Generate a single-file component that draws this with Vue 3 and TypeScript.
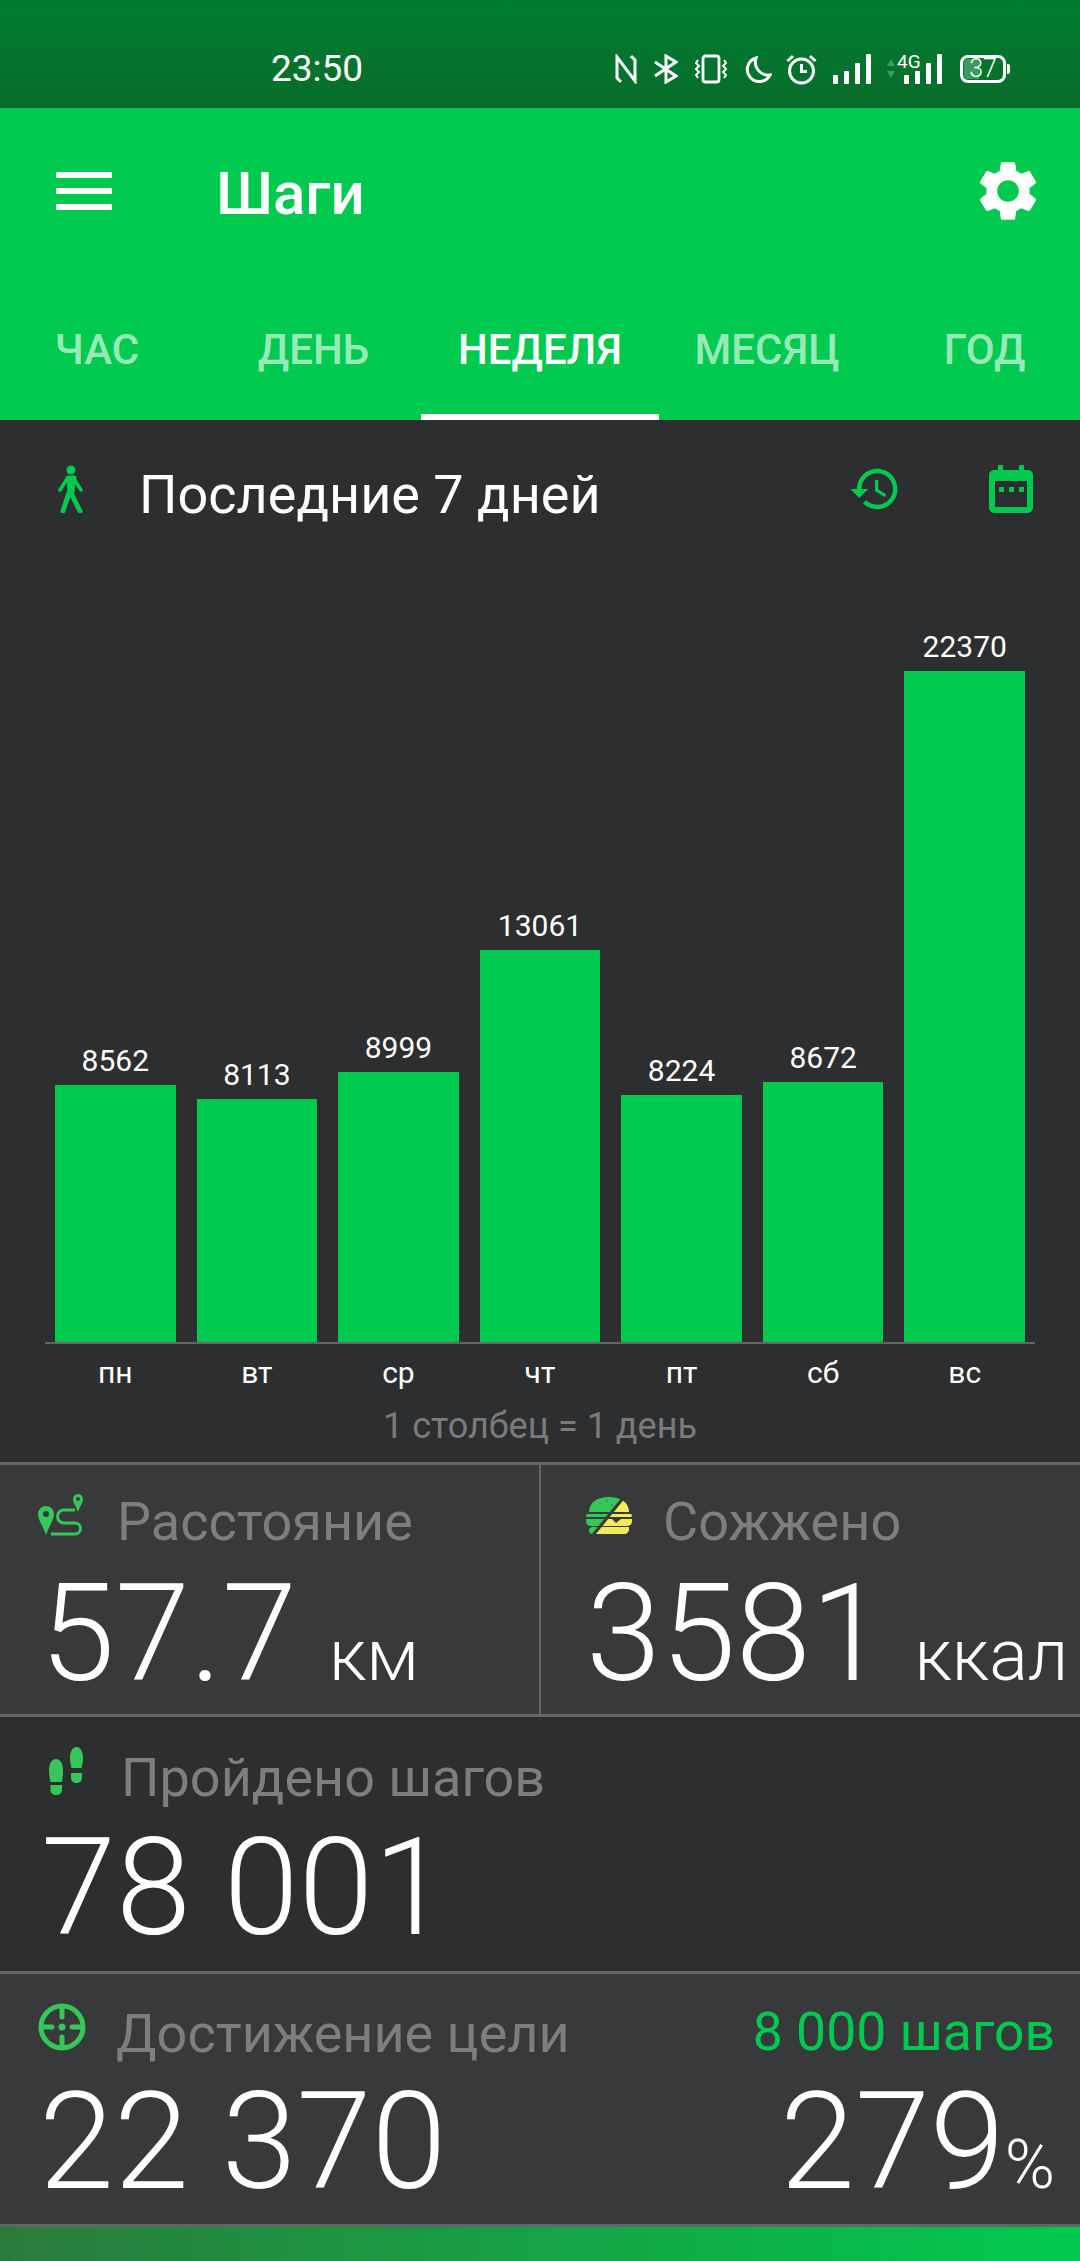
<template>
  <div class="screen">
    <div class="status-bar">
      <span class="clock">23:50</span>
      <div class="status-icons">
        <svg width="22" height="30" viewBox="0 0 22 30" fill="none" stroke="#fff" stroke-width="3"><path d="M6 28 L2 24 V3 L20 27 V6 L16 2" /></svg>
        <svg class="ml-17" width="24" height="30" viewBox="0 0 24 30" fill="none" stroke="#fff" stroke-width="3"><path d="M1 8 L22 22 L12 28 V2 L22 8 L1 22" /></svg>
        <svg class="ml-17" width="32" height="30" viewBox="0 0 32 30" fill="none" stroke="#fff" stroke-width="2.8"><rect x="8" y="2" width="16" height="26" rx="2.5" /><path d="M3 6 L1 9 L4 12 L1 15 L4 18 L1 21 L3 24 M29 6 L31 9 L28 12 L31 15 L28 18 L31 21 L29 24" stroke-width="2" /></svg>
        <svg class="ml-18" width="27" height="27" viewBox="0 0 27 27" fill="none" stroke="#fff" stroke-width="3"><path d="M11 2 A12 12 0 1 0 25 19 A13 13 0 0 1 11 2 Z" /></svg>
        <svg class="ml-14" width="31" height="32" viewBox="0 0 31 32" fill="none" stroke="#fff" stroke-width="3"><circle cx="15.5" cy="18" r="12" /><path d="M15.5 11 V18.5 H21 M1.5 8 L7 3 M24 3 L29.5 8" /></svg>
        <svg class="ml-16" width="38" height="30" viewBox="0 0 38 30" fill="#fff"><rect x="0" y="21" width="5" height="9" rx="1" /><rect x="11" y="17" width="5" height="13" rx="1" /><rect x="22" y="9" width="5" height="21" rx="1" /><rect x="33" y="0" width="5" height="30" rx="1" /></svg>
        <div class="net ml-15">
          <svg width="10" height="22" viewBox="0 0 10 22" fill="#3f9a60"><path d="M5 1 L9 8 H1 Z M5 20 L1 13 H9 Z" /></svg>
          <span class="net-label">4G</span>
          <svg class="net-bars" width="38" height="30" viewBox="0 0 38 30" fill="#fff"><rect x="0" y="21" width="5" height="9" rx="1" /><rect x="11" y="17" width="5" height="13" rx="1" /><rect x="22" y="9" width="5" height="21" rx="1" /><rect x="33" y="0" width="5" height="30" rx="1" /></svg>
        </div>
        <div class="battery ml-18"><span class="battery-fill"></span><span class="battery-num">37</span></div>
      </div>
    </div>

    <header class="app-bar">
      <div class="toolbar">
        <div class="menu-icon"><span></span><span></span><span></span></div>
        <h1 class="title">Шаги</h1>
        <svg class="gear" width="72" height="72" viewBox="0 0 24 24" fill="#fff"><path d="M19.14 12.94c.04-.3.06-.61.06-.94 0-.32-.02-.64-.07-.94l2.03-1.58a.49.49 0 0 0 .12-.61l-1.92-3.32a.488.488 0 0 0-.59-.22l-2.39.96c-.5-.38-1.03-.7-1.62-.94l-.36-2.54a.484.484 0 0 0-.48-.41h-3.84c-.24 0-.43.17-.47.41l-.36 2.54c-.59.24-1.13.57-1.62.94l-2.39-.96c-.22-.08-.47 0-.59.22L2.74 8.87c-.12.21-.08.47.12.61l2.03 1.58c-.05.3-.09.63-.09.94s.02.64.07.94l-2.03 1.58a.49.49 0 0 0-.12.61l1.92 3.32c.12.22.37.29.59.22l2.39-.96c.5.38 1.03.7 1.62.94l.36 2.54c.05.24.24.41.48.41h3.84c.24 0 .44-.17.47-.41l.36-2.54c.59-.24 1.13-.56 1.62-.94l2.39.96c.22.08.47 0 .59-.22l1.92-3.32c.12-.22.07-.47-.12-.61l-2.01-1.58zM12 15.6c-1.98 0-3.6-1.62-3.6-3.6s1.62-3.6 3.6-3.6 3.6 1.62 3.6 3.6-1.62 3.6-3.6 3.6z" /></svg>
      </div>
      <nav class="tabs">
        <div v-for="tab in tabs" :key="tab.name" class="tab" :class="[tab.cls, { active: tab.active }]">{{ tab.name }}</div>
      </nav>
    </header>

    <section class="chart-section">
      <div class="chart-head">
        <svg class="head-icon" width="26" height="48" viewBox="0 0 26 48" fill="none" stroke="#00c94f" stroke-linecap="round" stroke-linejoin="round"><circle cx="14" cy="5" r="4.5" fill="#00c94f" stroke="none" /><path d="M11 13 H17 L14 28 L23 46 M12 28 L6 46" stroke-width="5" /><path d="M10 14 L3 25 M17 14 L24 25" stroke-width="3.6" /><path d="M11 13 H17 L16 27 H12 Z" fill="#00c94f" stroke-width="3" /></svg>
        <span class="period">Последние 7 дней</span>
        <svg class="head-icon" width="54" height="54" viewBox="0 0 24 24" fill="#00c94f"><path d="M13 3c-4.97 0-9 4.03-9 9H1l3.89 3.89.07.14L9 12H6c0-3.87 3.13-7 7-7s7 3.13 7 7-3.13 7-7 7c-1.93 0-3.68-.79-4.94-2.06l-1.42 1.42C8.27 19.99 10.51 21 13 21c4.97 0 9-4.03 9-9s-4.03-9-9-9zm-1 5v5l4.28 2.54.72-1.21-3.5-2.08V8H12z" /></svg>
        <svg class="head-icon calendar" width="44" height="48" viewBox="0 0 44 48"><path fill="#00c94f" d="M9 0h5v5h16V0h5v5h4a5 5 0 0 1 5 5v33a5 5 0 0 1-5 5H5a5 5 0 0 1-5-5V10a5 5 0 0 1 5-5h4z" /><rect x="6" y="16" width="32" height="26" fill="#2d2e30" /><path fill="#00c94f" d="M10 22h5v5h-5zM20 22h5v5h-5zM30 22h5v5h-5z" /></svg>
      </div>

      <div class="chart">
        <div v-for="day in days" :key="day.label" class="bar-col">
          <span class="bar-value">{{ day.steps }}</span>
          <div class="bar" :style="{ height: barHeight(day.steps) + 'px' }"></div>
        </div>
      </div>
      <div class="day-labels">
        <span v-for="day in days" :key="day.label">{{ day.label }}</span>
      </div>
      <div class="caption">1 столбец = 1 день</div>
    </section>

    <section class="row row-two light">
      <div class="cell cell-left">
        <div class="label">
          <svg class="label-icon" width="50" height="42" viewBox="0 0 50 42" fill="none"><path fill="#35c759" fill-rule="evenodd" d="M8 12a8 8 0 0 1 8 8c0 6-5 12-8 21C5 32 0 26 0 20a8 8 0 0 1 8-8zm0 5a3 3 0 1 0 0 6 3 3 0 0 0 0-6z" /><path fill="#35c759" fill-rule="evenodd" d="M40 0a5 5 0 0 1 5 5c0 4-3 7-5 13-2-6-5-9-5-13a5 5 0 0 1 5-5zm0 3a2 2 0 1 0 0 4 2 2 0 0 0 0-4z" /><path stroke="#35c759" stroke-width="3" d="M37 16H26a6.5 6.5 0 0 0 0 13h11a5.5 5.5 0 0 1 0 11H13" /></svg>
          <span class="label-text t-dist">Расстояние</span>
        </div>
        <div class="value-line">
          <span class="big">57.7</span><span class="unit unit-km">км</span>
        </div>
      </div>
      <div class="cell cell-right">
        <div class="label">
          <svg class="label-icon" width="46" height="37" viewBox="0 0 46 37"><defs><clipPath id="burgerGreen"><path d="M0 0H36L6 37H0Z" /></clipPath><clipPath id="burgerYellow"><path d="M40 0H46V37H10Z" /></clipPath></defs><g clip-path="url(#burgerGreen)" fill="#35c759"><path d="M3 15C3 5 12 0 23 0s20 5 20 15Z" /><rect x="0" y="17" width="46" height="3" rx="1.500" /><path d="M0 22H46V24C46 27 44 29 41 29H5C2 29 0 27 0 24Z" /><rect x="3" y="30" width="40" height="7" rx="3.500" /></g><g clip-path="url(#burgerYellow)" fill="#f4ec57"><path d="M3 15C3 5 12 0 23 0s20 5 20 15Z" /><rect x="0" y="17" width="46" height="3" rx="1.500" /><path d="M0 22H26L30 26 35 22H46V24C46 27 44 29 41 29H5C2 29 0 27 0 24Z" /><path d="M3 30H43V32C43 35 41 37 38 37H8C5 37 3 35 3 32Z" /></g><g fill="#2b8f47"><circle cx="14" cy="7" r="1" /><circle cx="21" cy="4" r="1" /><circle cx="26" cy="8" r="1" /></g></svg>
          <span class="label-text t-burn">Сожжено</span>
        </div>
        <div class="value-line value-burn">
          <span class="big">3581</span><span class="unit unit-kcal">ккал</span>
        </div>
      </div>
    </section>

    <section class="row row-steps">
      <div class="label">
        <svg class="label-icon" width="34" height="48" viewBox="0 0 34 48" fill="#35c759"><path d="M7 12c4.500 0 7 5 7 11 0 5-.7 10-1 12H1.500C1 33 0 28 0 23 0 17 2.500 12 7 12z" /><path d="M1.500 38H13v5c0 3-2.500 5-5.800 5S1.500 46 1.500 43z" /><path d="M27.500 0C31.500 0 34 5 34 10.500 34 15 33 19 32.500 21H22.500C22 19 21 15 21 10.500 21 5 23.500 0 27.500 0z" /><path d="M22 26H33V31C33 34 30.500 36 27.500 36S22 34 22 31z" /></svg>
        <span class="label-text t-steps">Пройдено шагов</span>
      </div>
      <div class="big big-steps">78 001</div>
    </section>

    <section class="row row-goal light">
      <div class="goal-top">
        <div class="label">
          <svg class="label-icon" width="48" height="48" viewBox="0 0 48 48" fill="none" stroke="#35c759" stroke-width="5" stroke-linecap="round"><circle cx="24" cy="24" r="21" /><path d="M24 5V14M24 34V43M5 24H14M34 24H43" /><circle cx="24" cy="24" r="3.500" fill="#35c759" stroke="none" /></svg>
          <span class="label-text t-goal">Достижение цели</span>
        </div>
        <span class="goal-target">8 000 шагов</span>
      </div>
      <div class="goal-bottom">
        <span class="big">22 370</span>
        <span class="goal-pct"><span class="big">279</span><span class="pct">%</span></span>
      </div>
    </section>

    <div class="bottom-strip"></div>
  </div>
</template>

<script setup lang="ts">
interface Day {
  label: string
  steps: number
}

const tabs = [
  { name: 'ЧАС', cls: 'tab-hour', active: false },
  { name: 'ДЕНЬ', cls: 'tab-day', active: false },
  { name: 'НЕДЕЛЯ', cls: 'tab-week', active: true },
  { name: 'МЕСЯЦ', cls: 'tab-month', active: false },
  { name: 'ГОД', cls: 'tab-year', active: false },
]

const days: Day[] = [
  { label: 'пн', steps: 8562 },
  { label: 'вт', steps: 8113 },
  { label: 'ср', steps: 8999 },
  { label: 'чт', steps: 13061 },
  { label: 'пт', steps: 8224 },
  { label: 'сб', steps: 8672 },
  { label: 'вс', steps: 22370 },
]

const barHeight = (steps: number) => Math.round(steps * 0.03)
</script>

<style>
html,
body {
  margin: 0;
  background: #2d2e30;
}
</style>

<style scoped>
.screen {
  width: 1080px;
  height: 2261px;
  overflow: hidden;
  font-family: Roboto, "Noto Sans", sans-serif;
  background: #2d2e30;
  color: #fff;
}

.status-bar {
  height: 108px;
  box-sizing: border-box;
  display: flex;
  align-items: flex-start;
  padding: 50px 74px 0 271px;
  background: linear-gradient(#007d31, #076c2b);
}
.clock {
  font-size: 37px;
  line-height: 38px;
  font-weight: 400;
}
.status-icons {
  margin-left: auto;
  display: flex;
  align-items: center;
  height: 38px;
}
.ml-14 { margin-left: 14px; }
.ml-15 { margin-left: 15px; }
.ml-16 { margin-left: 16px; }
.ml-17 { margin-left: 17px; }
.ml-18 { margin-left: 18px; }

.net {
  display: flex;
  align-items: center;
  position: relative;
  width: 56px;
  height: 30px;
}
.net-label {
  position: absolute;
  left: 11px;
  top: -3px;
  font-size: 19px;
  line-height: 22px;
}
.net-bars {
  position: absolute;
  left: 18px;
  top: 0;
}
.battery {
  position: relative;
  width: 46px;
  height: 28px;
  box-sizing: border-box;
  border: 3px solid #fff;
  border-radius: 8px;
}
.battery::after {
  content: "";
  position: absolute;
  right: -7px;
  top: 6px;
  width: 3px;
  height: 10px;
  background: #fff;
  border-radius: 0 2px 2px 0;
}
.battery-fill {
  position: absolute;
  left: 1px;
  top: 1px;
  bottom: 1px;
  width: 15px;
  background: #3f9a60;
  border-radius: 4px 0 0 4px;
}
.battery-num {
  position: absolute;
  inset: 0;
  text-align: center;
  font-size: 25px;
  line-height: 22px;
  font-weight: 300;
}

.app-bar {
  height: 312px;
  background: #00c94f;
}
.toolbar {
  height: 165px;
  display: flex;
  align-items: center;
  box-sizing: border-box;
  padding: 0 36px 0 56px;
}
.menu-icon {
  width: 56px;
  display: flex;
  flex-direction: column;
  gap: 10px;
}
.menu-icon span {
  height: 6px;
  background: #fff;
}
.title {
  margin: 6px 0 0 104px;
  font-size: 60px;
  font-weight: 500;
  line-height: 66px;
  flex: 1;
}
.tabs {
  display: grid;
  grid-template-columns: 194px 227px 238px 216px 205px;
  height: 147px;
}
.tab {
  box-sizing: border-box;
  text-align: center;
  font-size: 42px;
  font-weight: 500;
  line-height: 48px;
  padding-top: 53px;
  color: rgba(255, 255, 255, 0.62);
}
.tab-day { padding-left: 12px; }
.tab-year { padding-left: 14px; }
.tab.active {
  color: #fff;
  border-bottom: 6px solid #fff;
}

.chart-section {
  height: 1045px;
  box-sizing: border-box;
  border-bottom: 3px solid #636465;
  display: flex;
  flex-direction: column;
}
.chart-head {
  display: flex;
  align-items: center;
  height: 98px;
  padding: 26px 47px 0 57px;
}
.head-icon {
  margin-bottom: 12px;
}
.period {
  margin-left: 56px;
  font-size: 54px;
  line-height: 60px;
  flex: 1;
}
.calendar { margin-left: 87px; }
.chart {
  height: 798px;
  margin: 0 45px;
  padding: 0 10px;
  display: grid;
  grid-template-columns: repeat(7, 1fr);
  column-gap: 21px;
  align-items: end;
  border-bottom: 2px solid #636465;
}
.bar-col {
  display: flex;
  flex-direction: column;
  align-items: center;
}
.bar-value {
  font-size: 30px;
  line-height: 36px;
  margin-bottom: 6px;
}
.bar {
  width: 100%;
  background: #00c94f;
}
.day-labels {
  margin: 0 55px;
  display: grid;
  grid-template-columns: repeat(7, 1fr);
  column-gap: 21px;
  padding-top: 11px;
  text-align: center;
  font-size: 30px;
  line-height: 36px;
}
.caption {
  margin-top: 14px;
  text-align: center;
  font-size: 36px;
  line-height: 42px;
  color: #7a7b7c;
}

.row {
  box-sizing: border-box;
  border-bottom: 3px solid #636465;
}
.light {
  background: #38393b;
}
.row-two {
  height: 252px;
  display: grid;
  grid-template-columns: 541px 1fr;
}
.cell {
  padding-top: 25px;
  box-sizing: border-box;
}
.cell-left {
  padding-left: 38px;
  border-right: 2px solid #636465;
}
.cell-right {
  padding-left: 45px;
  white-space: nowrap;
}
.label {
  display: flex;
  align-items: center;
  height: 64px;
}
.label-icon {
  margin-bottom: 14px;
}
.label-text {
  font-size: 54px;
  line-height: 60px;
  color: #7d7e7f;
}
.t-dist { margin-left: 29px; }
.t-burn { margin-left: 31px; }
.t-steps { margin-left: 38px; }
.t-goal { margin-left: 30px; }
.big {
  font-size: 135px;
  font-weight: 300;
  line-height: 136px;
}
.value-line {
  display: flex;
  align-items: baseline;
  margin-top: 12px;
  padding-left: 2px;
}
.value-burn {
  padding-left: 0;
}
.unit {
  font-size: 72px;
  font-weight: 300;
  line-height: 68px;
}
.unit-km { margin-left: 32px; }
.unit-kcal { margin-left: 29px; }

.row-steps {
  height: 257px;
  padding: 29px 0 0 49px;
}
.big-steps {
  margin: 10px 0 0 -8px;
}

.row-goal {
  height: 253px;
  padding: 28px 25px 0 38px;
}
.goal-top {
  display: flex;
  align-items: center;
  justify-content: space-between;
}
.goal-target {
  font-size: 53.5px;
  line-height: 60px;
  margin-top: -4px;
  color: #00c94f;
}
.goal-bottom {
  display: flex;
  justify-content: space-between;
  align-items: baseline;
  margin-top: 8px;
  padding-left: 1px;
}
.goal-pct {
  display: flex;
  align-items: baseline;
}
.pct {
  font-size: 68px;
  font-weight: 300;
}

.bottom-strip {
  height: 34px;
  background: linear-gradient(90deg, #2b7b3b, #00c94f);
}
</style>
